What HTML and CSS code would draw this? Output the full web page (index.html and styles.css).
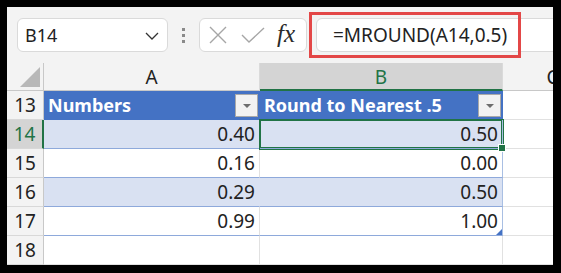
FILE: index.html
```html
<!DOCTYPE html>
<html lang="en">
<head>
    <meta charset="UTF-8">
    <title>MROUND</title>
    <link rel="stylesheet" href="styles.css">
</head>
<body>
    <div class="frame">
        <div class="toolbar">
            <div class="namebox">
                <span>B14</span>
                <svg class="chev" width="14" height="8" viewBox="0 0 14 8"><polyline points="1,1 7,7 13,1" fill="none" stroke="#333" stroke-width="1.3"/></svg>
            </div>
            <div class="dots"><i></i><i></i><i></i></div>
            <div class="fxgroup">
                <svg width="18" height="18" viewBox="0 0 18 18"><path d="M1 1 L17 17 M17 1 L1 17" stroke="#a6a6a6" stroke-width="1.4" fill="none"/></svg>
                <svg width="24" height="16" viewBox="0 0 24 16"><polyline points="1,8 8,15 23,1" stroke="#a6a6a6" stroke-width="1.4" fill="none"/></svg>
                <span class="fx">fx</span>
            </div>
            <div class="formula">=MROUND(A14,0.5)</div>
        </div>
        <div class="callout"></div>

        <div class="sheet">
            <div class="corner"><span class="tri"></span></div>
            <div class="colhead">A</div>
            <div class="colhead sel">B</div>
            <div class="colhead">C</div>

            <div class="rowhead">13</div>
            <div class="th">Numbers<span class="filter"></span></div>
            <div class="th">Round to Nearest .5<span class="filter"></span></div>
            <div class="cell"></div>

            <div class="rowhead sel">14</div>
            <div class="td band">0.40</div>
            <div class="td band last active">0.50<span class="handle"></span></div>
            <div class="cell"></div>

            <div class="rowhead">15</div>
            <div class="td">0.16</div>
            <div class="td last">0.00</div>
            <div class="cell"></div>

            <div class="rowhead">16</div>
            <div class="td band">0.29</div>
            <div class="td band last">0.50</div>
            <div class="cell"></div>

            <div class="rowhead">17</div>
            <div class="td">0.99</div>
            <div class="td last">1.00<span class="endmark"></span></div>
            <div class="cell"></div>

            <div class="rowhead">18</div>
            <div class="cell"></div>
            <div class="cell"></div>
            <div class="cell"></div>
        </div>
    </div>
</body>
</html>
```

FILE: styles.css
```css
body {
    margin: 0;
    padding: 7px;
    background-color: #000;
    font-family: "Noto Sans", "Open Sans", sans-serif;
    color: #222;
}

.frame {
    position: relative;
    width: 546px;
    height: 258px;
    overflow: hidden;
    background-color: #f3f3f3;
}

/* formula bar */
.toolbar {
    display: flex;
    align-items: center;
    height: 56px;
    padding-left: 10px;
    box-sizing: border-box;
}

.toolbar > * {
    flex: none;
}

.namebox {
    display: flex;
    align-items: center;
    justify-content: space-between;
    width: 151px;
    height: 34px;
    box-sizing: border-box;
    padding: 0 8px 0 7px;
    background-color: #fff;
    border: 1px solid #dadada;
    border-radius: 6px;
    font-size: 18px;
}

.chev {
    margin-top: 1px;
}

.dots {
    display: flex;
    flex-direction: column;
    gap: 3px;
    margin: 0 14px 0 14px;
}

.dots i {
    width: 3px;
    height: 3px;
    background-color: #8a8a8a;
}

.fxgroup {
    display: flex;
    align-items: center;
    width: 108px;
    height: 34px;
    box-sizing: border-box;
    padding-left: 9px;
    gap: 15px;
    background-color: #fff;
    border: 1px solid #dadada;
    border-radius: 6px;
}

.fxgroup svg:first-child {
    margin-right: -1px;
}

.fx {
    font-family: "Liberation Serif", serif;
    font-style: italic;
    font-size: 25px;
    color: #2a2a2a;
    margin-left: -3px;
    margin-top: -3px;
}

.formula {
    width: 260px;
    height: 34px;
    margin-left: 9px;
    box-sizing: border-box;
    padding-left: 16px;
    line-height: 32px;
    background-color: #fff;
    border: 1px solid #dadada;
    border-radius: 6px;
    font-size: 19px;
}

.callout {
    position: absolute;
    left: 302px;
    top: 5px;
    width: 212px;
    height: 46px;
    box-sizing: border-box;
    border: 3px solid #e34747;
}

/* grid */
.sheet {
    display: grid;
    grid-template-columns: 37px 216px 243px 100px;
    grid-template-rows: 28px repeat(6, 29px);
    background-color: #fff;
}

.sheet > div {
    box-sizing: border-box;
    border-right: 1px solid #e1e1e1;
    border-bottom: 1px solid #e1e1e1;
    position: relative;
}

.corner {
    background-color: #f3f3f3;
    border-right-color: #c8c8c8 !important;
    border-bottom-color: #c8c8c8 !important;
}

.tri {
    position: absolute;
    right: 3px;
    bottom: 3px;
    width: 0;
    height: 0;
    border-left: 20px solid transparent;
    border-bottom: 20px solid #b8b8b8;
}

.colhead {
    background-color: #f3f3f3;
    border-bottom-color: #c8c8c8 !important;
    border-right-color: #dadada !important;
    text-align: center;
    font-size: 19px;
    line-height: 28px;
}

.colhead.sel {
    background-color: #d4d4d4;
    color: #217346;
    border-bottom: 2px solid #217346 !important;
}

.rowhead {
    background-color: #f3f3f3;
    border-right-color: #c8c8c8 !important;
    border-bottom-color: #d8d8d8 !important;
    text-align: center;
    font-size: 19px;
    line-height: 28px;
}

.rowhead.sel {
    background-color: #d4d4d4;
    color: #217346;
    border-right: 2px solid #217346 !important;
}

.th {
    background-color: #4472c4;
    color: #fff;
    font-weight: bold;
    font-size: 18px;
    line-height: 28px;
    padding-left: 4px;
    border-right-color: #4472c4 !important;
    border-bottom-color: #4472c4 !important;
}

.filter {
    position: absolute;
    right: 1px;
    top: 3px;
    width: 23px;
    height: 23px;
    box-sizing: border-box;
    background-color: #f2f2f2;
    border: 1px solid #a9a9a9;
}

.filter::after {
    content: "";
    position: absolute;
    left: 7px;
    top: 9px;
    border-left: 4px solid transparent;
    border-right: 4px solid transparent;
    border-top: 4px solid #6d6d6d;
}

.td {
    text-align: right;
    font-size: 19px;
    line-height: 28px;
    padding-right: 4px;
    border-bottom-color: #8ea9db !important;
}

.td.band {
    background-color: #d9e1f2;
    border-right-color: #d9e1f2;
}

.td.last {
    border-right-color: #a9bfe3 !important;
}

.td.active {
    box-shadow: 0 0 0 1px #217346, inset 0 0 0 1px #217346;
    z-index: 1;
}

.handle {
    position: absolute;
    right: -4px;
    bottom: -4px;
    width: 6px;
    height: 6px;
    background-color: #217346;
    border: 1px solid #fff;
}

.endmark {
    position: absolute;
    right: 0;
    bottom: 0;
    width: 0;
    height: 0;
    border-left: 6px solid transparent;
    border-bottom: 6px solid #4472c4;
}
```
